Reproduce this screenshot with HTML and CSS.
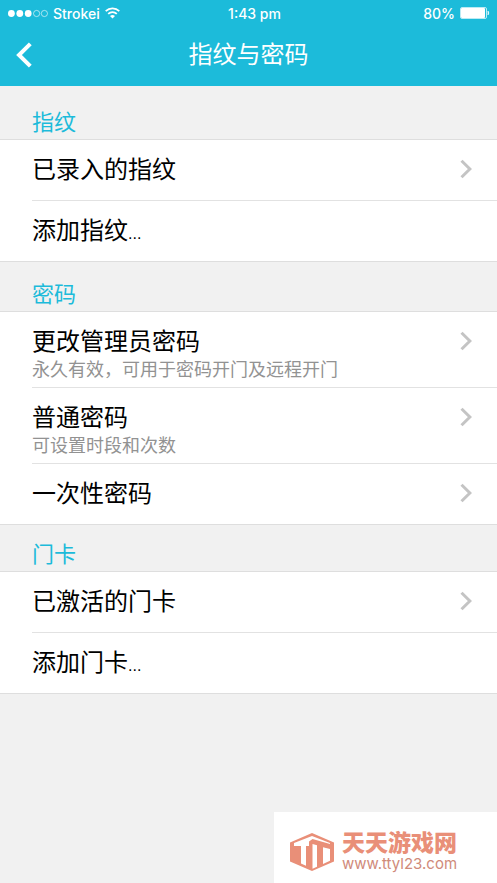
FILE: index.html
```html
<!DOCTYPE html>
<html lang="zh-CN">
<head>
<meta charset="utf-8">
<meta name="viewport" content="width=device-width, initial-scale=1">
<title>指纹与密码</title>
<link rel="stylesheet" href="styles.css">
</head>
<body>
<header class="top">
  <div class="status">
    <div class="status-left">
      <svg class="signal" width="41" height="9" viewBox="0 0 41 9" aria-hidden="true">
        <g fill="#fff"><circle cx="4.4" cy="4.5" r="3.4"/><circle cx="12.8" cy="4.5" r="3.4"/><circle cx="21.2" cy="4.5" r="3.4"/></g>
        <g fill="none" stroke="#fff" stroke-opacity=".75" stroke-width=".8"><circle cx="29.6" cy="4.5" r="3.1"/><circle cx="37.4" cy="4.5" r="3.1"/></g>
      </svg>
      <span>Strokei</span>
      <svg width="15" height="12" viewBox="0 0 15 12" aria-hidden="true">
        <g fill="none" stroke="#fff" stroke-width="1.7"><path d="M.7 4.2a9.7 9.7 0 0 1 13.6 0"/><path d="M3.2 6.9a6.1 6.1 0 0 1 8.6 0"/></g>
        <path fill="#fff" d="M7.5 11.6 5 9.1a3.6 3.6 0 0 1 5 0z"/>
      </svg>
    </div>
    <span>1:43 pm</span>
    <div class="status-right">
      <span>80%</span>
      <svg width="30" height="12" viewBox="0 0 30 12" aria-hidden="true">
        <rect x=".5" y=".5" width="26" height="11" rx="1.5" fill="none" stroke="#fff" stroke-opacity=".7"/>
        <rect x="1" y="1" width="24" height="10" rx="1" fill="#fff"/>
        <path d="M28 4q1.6 2 0 4z" fill="#fff" stroke="#fff" stroke-width=".6"/>
      </svg>
    </div>
  </div>
  <nav class="bar">
    <button class="back" type="button" aria-label="返回">
      <svg width="16" height="26" viewBox="0 0 16 26" aria-hidden="true"><path d="M14.3 1.8 3 13l11.3 11.2" fill="none" stroke="#fff" stroke-width="4"/></svg>
    </button>
    <h1>指纹与密码</h1>
  </nav>
</header>
<main>
  <section>
    <h2 class="head-first">指纹</h2>
    <ul>
      <li><a href="#"><span class="name">已录入的指纹</span><svg class="chevron" viewBox="0 0 12 20"><path d="m1.5 1.8 8.4 8.2-8.4 8.2"/></svg></a></li>
      <li><a href="#"><span class="name">添加指纹<span class="dots">...</span></span></a></li>
    </ul>
  </section>
  <section>
    <h2>密码</h2>
    <ul>
      <li><a class="tall" href="#"><span class="name">更改管理员密码<small>永久有效，可用于密码开门及远程开门</small></span><svg class="chevron" viewBox="0 0 12 20"><path d="m1.5 1.8 8.4 8.2-8.4 8.2"/></svg></a></li>
      <li><a class="tall" href="#"><span class="name">普通密码<small>可设置时段和次数</small></span><svg class="chevron" viewBox="0 0 12 20"><path d="m1.5 1.8 8.4 8.2-8.4 8.2"/></svg></a></li>
      <li><a href="#"><span class="name">一次性密码</span><svg class="chevron" viewBox="0 0 12 20"><path d="m1.5 1.8 8.4 8.2-8.4 8.2"/></svg></a></li>
    </ul>
  </section>
  <section>
    <h2 class="head-last">门卡</h2>
    <ul>
      <li><a href="#"><span class="name">已激活的门卡</span><svg class="chevron" viewBox="0 0 12 20"><path d="m1.5 1.8 8.4 8.2-8.4 8.2"/></svg></a></li>
      <li><a href="#"><span class="name">添加门卡<span class="dots">...</span></span></a></li>
    </ul>
  </section>
</main>
<footer class="brand">
  <svg width="44" height="38" viewBox="0 0 44 38" aria-hidden="true">
    <path fill="#e98f78" d="M22 0 44 9.5v19L22 38 0 28.5v-19z"/>
    <path fill="#fff" d="M4 10 22 3l18 7v1L22.500 6 19 8.500V13h-3v19.800l-5-2.200V13H4z"/>
    <path fill="#fff" d="M22.500 11l4.500 1.200v21.500l-4.500 2z"/>
    <path fill="#fff" d="M33 14.200l7 1.800v11.700l-7 3.200z"/>
  </svg>
  <div>
    <strong>天天游戏网</strong>
    <span class="url">www.ttyl23.com</span>
  </div>
</footer>
</body>
</html>
```
FILE: styles.css
```css
* { box-sizing: border-box; }

body {
  margin: 0;
  min-height: 100vh;
  display: flex;
  flex-direction: column;
  background: #f1f1f1;
  color: #000;
  font-family: "Liberation Sans", "Noto Sans CJK SC", sans-serif;
}

svg { display: block; flex: none; }

.top {
  background: #1cbbda;
  color: #fff;
}

.status {
  display: grid;
  grid-template-columns: 1fr auto 1fr;
  align-items: center;
  height: 26px;
  padding: 0 7px;
  font-family: Inter, sans-serif;
  font-size: 14px;
  font-weight: 500;
}

.status > span { padding-left: 12px; }

.status-left,
.status-right {
  display: flex;
  align-items: center;
  gap: 5px;
}

.status-right { justify-content: flex-end; }

.bar {
  display: grid;
  grid-template-columns: 48px 1fr 48px;
  align-items: center;
  height: 60px;
  padding-bottom: 2px;
}

.back {
  padding: 0 0 0 16px;
  border: 0;
  background: none;
}

h1 {
  margin: 0;
  text-align: center;
  font-size: 24px;
  line-height: 32px;
  font-weight: 400;
}

h2 {
  display: flex;
  align-items: flex-end;
  height: 50px;
  margin: 0;
  padding: 0 32px;
  border-bottom: 1px solid #dedede;
  color: #1cbbda;
  font-size: 22px;
  line-height: 32px;
  font-weight: 400;
}

.head-first { height: 54px; }
.head-last { height: 47px; }

ul {
  margin: 0;
  padding: 0 0 0 32px;
  list-style: none;
  background: #fff;
  border-bottom: 1px solid #dedede;
}

li + li { border-top: 1px solid #e2e2e2; }

a {
  display: flex;
  justify-content: space-between;
  min-height: 60px;
  padding: 15px 25px 0 0;
  color: inherit;
  text-decoration: none;
}

.tall { min-height: 75px; }

.name {
  font-size: 24px;
  line-height: 30px;
}

small {
  display: block;
  color: #929292;
  font-size: 18px;
  line-height: 26px;
}

.dots { font-size: 16px; }

.chevron {
  width: 12px;
  height: 20px;
  margin-top: 4px;
  fill: none;
  stroke: #c4c4c4;
  stroke-width: 3;
}

.brand {
  display: flex;
  align-items: center;
  align-self: flex-end;
  gap: 8px;
  width: 223px;
  height: 71px;
  margin-top: auto;
  padding: 8px 16px 0;
  background: #fff;
  color: #e98f78;
}

.brand strong {
  display: block;
  font-size: 23px;
  line-height: 24px;
  font-weight: 900;
}

.url {
  display: block;
  padding-top: 1px;
  color: #d08a7a;
  font-family: Inter, sans-serif;
  font-size: 15px;
  line-height: 16px;
}
```
